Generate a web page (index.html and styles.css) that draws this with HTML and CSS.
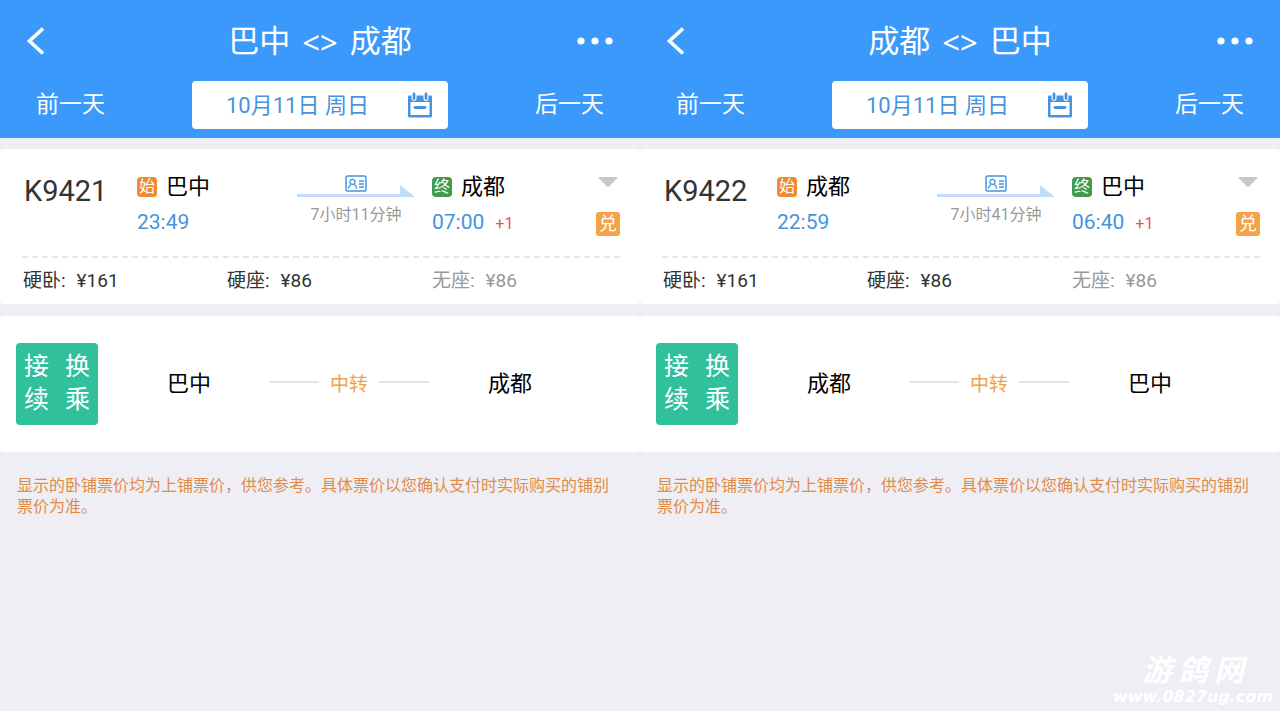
FILE: index.html
```html
<!DOCTYPE html>
<html lang="zh-CN">
<head>
    <meta charset="UTF-8">
    <meta name="viewport" content="width=device-width, initial-scale=1.0">
    <title>巴中 - 成都</title>
    <link rel="stylesheet" href="styles.css">
</head>
<body>
    <svg class="symbols" aria-hidden="true">
        <symbol id="icon-back" viewBox="0 0 18 28">
            <path d="M17 1.500L3.500 14 17 26.500" fill="none" stroke="currentColor" stroke-width="3.600"/>
        </symbol>
        <symbol id="icon-more" viewBox="0 0 38 8">
            <circle cx="5" cy="4" r="3.600" fill="currentColor"/>
            <circle cx="19" cy="4" r="3.600" fill="currentColor"/>
            <circle cx="33" cy="4" r="3.600" fill="currentColor"/>
        </symbol>
        <symbol id="icon-calendar" viewBox="0 0 26 26">
            <path d="M2 3.500h22a1 1 0 0 1 1 1V24a1.500 1.500 0 0 1-1.500 1.500h-21A1.500 1.500 0 0 1 1 24V4.500a1 1 0 0 1 1-1z" fill="currentColor"/>
            <path d="M3.500 10h19v13h-19z" fill="#fff"/>
            <path d="M4.500 3h5v3.500a2.500 2.500 0 0 1-5 0zM16.500 3h5v3.500a2.500 2.500 0 0 1-5 0z" fill="#fff"/>
            <path d="M7 2v4.500M19 2v4.500M8 15.500h10" stroke="currentColor" stroke-width="2.800" stroke-linecap="round"/>
        </symbol>
        <symbol id="icon-idcard" viewBox="0 0 22 17">
            <rect x="1" y="1" width="20" height="15" rx="1.500" fill="none" stroke="currentColor" stroke-width="1.500"/>
            <circle cx="7.500" cy="6.800" r="2.500" fill="none" stroke="currentColor" stroke-width="1.300"/>
            <path d="M3.200 13.500c.6-2.500 1.700-3.600 3-4.300M11.800 13.500c-.6-2.500-1.700-3.600-3-4.300M14 6h5M14 9h5M14 12h5" fill="none" stroke="currentColor" stroke-width="1.300"/>
        </symbol>
        <symbol id="icon-arrow" viewBox="0 0 118 12" preserveAspectRatio="none">
            <path d="M0 9h103V0l15 12H0z" fill="currentColor"/>
        </symbol>
        <symbol id="icon-caret" viewBox="0 0 20 10">
            <path d="M1 0h18a.6.6 0 0 1 .4 1L11 9.500a1.400 1.400 0 0 1-2 0L.6 1A.6.6 0 0 1 1 0z" fill="currentColor"/>
        </symbol>
    </svg>

    <div class="screens">
        <section class="screen">
            <header class="header">
                <div class="title-bar">
                    <a class="back" href="#" aria-label="返回"><svg width="18" height="28"><use href="#icon-back"/></svg></a>
                    <h1 class="title"><span>巴中</span><span class="both">&lt;&gt;</span><span>成都</span></h1>
                    <button class="more" type="button" aria-label="更多"><svg width="38" height="8"><use href="#icon-more"/></svg></button>
                </div>
                <div class="date-bar">
                    <button class="day" type="button">前一天</button>
                    <button class="date" type="button"><span class="date-text">10月11日 周日</span><svg width="26" height="26"><use href="#icon-calendar"/></svg></button>
                    <button class="day next" type="button">后一天</button>
                </div>
            </header>

            <article class="train">
                <div class="train-main">
                    <h2 class="train-no">K9421</h2>
                    <div class="stop">
                        <div class="station"><span class="badge start">始</span>巴中</div>
                        <div class="time">23:49</div>
                    </div>
                    <div class="trip">
                        <svg class="idcard" width="22" height="17"><use href="#icon-idcard"/></svg>
                        <svg class="arrow" width="118" height="12"><use href="#icon-arrow"/></svg>
                        <span class="duration">7小时11分钟</span>
                    </div>
                    <div class="stop">
                        <div class="station"><span class="badge end">终</span>成都</div>
                        <div class="time">07:00<span class="plus">+1</span></div>
                    </div>
                    <div class="extra">
                        <button class="expand" type="button" aria-label="展开"><svg width="20" height="10"><use href="#icon-caret"/></svg></button>
                        <span class="exchange">兑</span>
                    </div>
                </div>
                <ul class="prices">
                    <li><span>硬卧:</span><span>¥161</span></li>
                    <li><span>硬座:</span><span>¥86</span></li>
                    <li class="none"><span>无座:</span><span>¥86</span></li>
                </ul>
            </article>

            <article class="transfer">
                <div class="transfer-tag"><span>接</span><span>换</span><span>续</span><span>乘</span></div>
                <div class="transfer-city">巴中</div>
                <div class="transfer-mid">中转</div>
                <div class="transfer-city">成都</div>
            </article>

            <p class="notice">显示的卧铺票价均为上铺票价，供您参考。具体票价以您确认支付时实际购买的铺别票价为准。</p>
        </section>

        <section class="screen">
            <header class="header">
                <div class="title-bar">
                    <a class="back" href="#" aria-label="返回"><svg width="18" height="28"><use href="#icon-back"/></svg></a>
                    <h1 class="title"><span>成都</span><span class="both">&lt;&gt;</span><span>巴中</span></h1>
                    <button class="more" type="button" aria-label="更多"><svg width="38" height="8"><use href="#icon-more"/></svg></button>
                </div>
                <div class="date-bar">
                    <button class="day" type="button">前一天</button>
                    <button class="date" type="button"><span class="date-text">10月11日 周日</span><svg width="26" height="26"><use href="#icon-calendar"/></svg></button>
                    <button class="day next" type="button">后一天</button>
                </div>
            </header>

            <article class="train">
                <div class="train-main">
                    <h2 class="train-no">K9422</h2>
                    <div class="stop">
                        <div class="station"><span class="badge start">始</span>成都</div>
                        <div class="time">22:59</div>
                    </div>
                    <div class="trip">
                        <svg class="idcard" width="22" height="17"><use href="#icon-idcard"/></svg>
                        <svg class="arrow" width="118" height="12"><use href="#icon-arrow"/></svg>
                        <span class="duration">7小时41分钟</span>
                    </div>
                    <div class="stop">
                        <div class="station"><span class="badge end">终</span>巴中</div>
                        <div class="time">06:40<span class="plus">+1</span></div>
                    </div>
                    <div class="extra">
                        <button class="expand" type="button" aria-label="展开"><svg width="20" height="10"><use href="#icon-caret"/></svg></button>
                        <span class="exchange">兑</span>
                    </div>
                </div>
                <ul class="prices">
                    <li><span>硬卧:</span><span>¥161</span></li>
                    <li><span>硬座:</span><span>¥86</span></li>
                    <li class="none"><span>无座:</span><span>¥86</span></li>
                </ul>
            </article>

            <article class="transfer">
                <div class="transfer-tag"><span>接</span><span>换</span><span>续</span><span>乘</span></div>
                <div class="transfer-city">成都</div>
                <div class="transfer-mid">中转</div>
                <div class="transfer-city">巴中</div>
            </article>

            <p class="notice">显示的卧铺票价均为上铺票价，供您参考。具体票价以您确认支付时实际购买的铺别票价为准。</p>
        </section>
    </div>

    <div class="watermark">
        <span class="watermark-name"><span>游</span><span>鸽</span><span>网</span></span>
        <span class="watermark-url">www.0827ug.com</span>
    </div>
</body>
</html>
```
FILE: styles.css
```css
* {
    box-sizing: border-box;
}

body {
    margin: 0;
    background-color: #efeef4;
    color: #000;
    font-family: Roboto, "Noto Sans CJK SC", sans-serif;
}

button {
    padding: 0;
    border: none;
    background: none;
    color: inherit;
    font: inherit;
    cursor: pointer;
}

svg {
    display: block;
}

.symbols {
    display: none;
}

.screens {
    display: grid;
    grid-template-columns: 1fr 1fr;
    min-height: 100vh;
}

/* header */
.header {
    height: 138px;
    background-color: #3c99fc;
    color: #fff;
}

.title-bar {
    display: grid;
    grid-template-columns: 1fr auto 1fr;
    align-items: center;
    height: 81px;
    padding: 0 26px;
}

.title {
    display: flex;
    gap: 12px;
    margin: 0;
    padding-top: 2px;
    font-size: 31px;
    font-weight: 400;
    line-height: 40px;
}

.both {
    font-family: "Noto Sans", sans-serif;
}

.back {
    color: #fff;
}

.more {
    justify-self: end;
}

.date-bar {
    display: grid;
    grid-template-columns: 1fr 256px 1fr;
    padding: 0 36px;
}

.day {
    justify-self: start;
    font-size: 23px;
    line-height: 46px;
}

.next {
    justify-self: end;
}

.date {
    display: flex;
    align-items: center;
    justify-content: space-between;
    height: 48px;
    padding: 0 15px 0 34px;
    border-radius: 4px;
    background-color: #fff;
    color: #4694de;
    font-size: 22px;
}

.date-text {
    padding-bottom: 5px;
}

/* train card */
.train {
    margin-top: 11px;
    padding: 0 20px 0 22px;
    border-radius: 4px;
    background-color: #fff;
}

.train-main {
    display: grid;
    grid-template-columns: 115fr 160fr 118fr 181fr 24px;
    height: 109px;
    padding-top: 22px;
    border-bottom: 2px dashed #e6e6e8;
}

.train-no {
    margin: 0;
    padding-left: 2px;
    color: #333;
    font-size: 29px;
    font-weight: 400;
    line-height: 40px;
}

.station {
    display: flex;
    align-items: center;
    gap: 9px;
    font-size: 22px;
    line-height: 32px;
}

.badge {
    width: 20px;
    height: 20px;
    border-radius: 4px;
    color: #fff;
    font-size: 16px;
    line-height: 20px;
    text-align: center;
}

.start {
    background-color: #f08a30;
}

.end {
    background-color: #3c9c48;
}

.trip + .stop {
    padding-left: 17px;
}

.time {
    color: #4694de;
    font-size: 21px;
    line-height: 38px;
}

.plus {
    margin-left: 11px;
    color: #de5560;
    font-size: 16px;
}

.trip {
    display: flex;
    flex-direction: column;
    align-items: center;
    padding-top: 4px;
}

.idcard {
    color: #4694de;
}

.arrow {
    width: 100%;
    margin-top: -7px;
    color: #c2dcf8;
}

.duration {
    margin-top: 6px;
    color: #999;
    font-size: 16px;
    line-height: 24px;
    white-space: nowrap;
}

.extra {
    display: flex;
    flex-direction: column;
    align-items: center;
    gap: 25px;
    padding-top: 6px;
}

.expand {
    color: #c8c8c8;
}

.exchange {
    width: 24px;
    height: 24px;
    border-radius: 3px;
    background-color: #f4a348;
    color: #fff;
    font-size: 18px;
    line-height: 24px;
    text-align: center;
}

.prices {
    display: grid;
    grid-template-columns: 204fr 205fr 188fr;
    height: 46px;
    margin: 0;
    padding: 0 0 0 1px;
    color: #333;
    font-size: 19px;
    line-height: 46px;
    list-style: none;
}

.prices li {
    display: flex;
    gap: 11px;
}

.prices .none {
    color: #999;
}

/* transfer card */
.transfer {
    display: grid;
    grid-template-columns: 93px 160fr 160fr 162fr 33fr;
    align-items: center;
    height: 136px;
    margin-top: 12px;
    padding: 0 16px;
    border-radius: 4px;
    background-color: #fff;
}

.transfer-tag {
    display: grid;
    grid-template-columns: 41px 41px;
    grid-auto-rows: 33px;
    align-content: center;
    justify-items: center;
    width: 82px;
    height: 82px;
    padding-bottom: 3px;
    border-radius: 4px;
    background-color: #30c09c;
    color: #fff;
    font-size: 25px;
    line-height: 33px;
}

.transfer-city {
    padding-bottom: 6px;
    font-size: 22px;
    text-align: center;
}

.transfer-mid {
    display: flex;
    align-items: center;
    gap: 11px;
    padding-bottom: 4px;
    color: #f0a048;
    font-size: 19px;
    white-space: nowrap;
}

.transfer-mid::before,
.transfer-mid::after {
    content: "";
    flex: 1;
    height: 2px;
    background-color: #e4e4e4;
}

.notice {
    margin: 23px 0 0;
    padding: 0 17px;
    color: #e08c48;
    font-size: 16px;
    line-height: 21px;
}

/* site mark over the page corner */
.watermark {
    position: absolute;
    right: 7px;
    bottom: 4px;
    display: flex;
    flex-direction: column;
    align-items: center;
    color: #fff;
    font-style: italic;
    font-weight: 700;
}

.watermark-name {
    display: flex;
    gap: 6px;
    font-size: 30px;
    line-height: 32px;
}

.watermark-url {
    font-family: "DejaVu Sans", sans-serif;
    font-size: 16px;
    line-height: 20px;
}
```
